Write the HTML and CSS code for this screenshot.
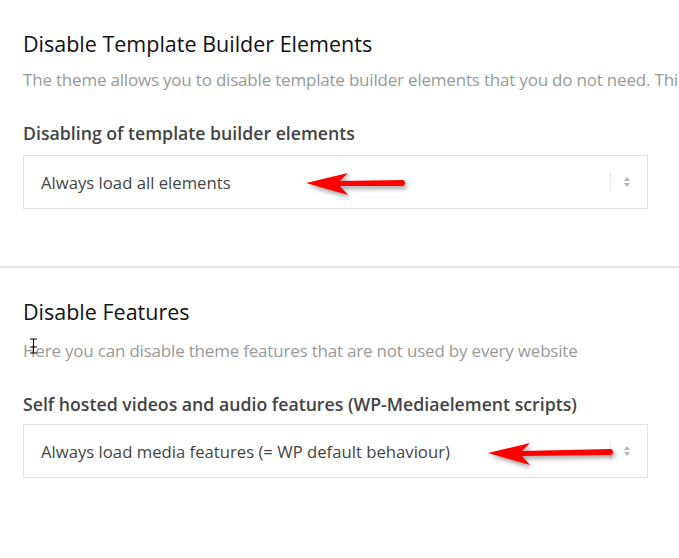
FILE: index.html
```html
<!DOCTYPE html>
<html lang="en">

<head>
    <meta charset="UTF-8">
    <meta name="viewport" content="width=device-width, initial-scale=1.0">
    <title>Performance - Disable Features</title>
    <link rel="stylesheet" href="styles.css">
</head>

<body>

    <section class="group first">
        <h2>Disable Template Builder Elements</h2>
        <p class="desc">The theme allows you to disable template builder elements that you do not need. This can speed up your site.</p>

        <div class="field">
            <label>Disabling of template builder elements</label>
            <div class="select">
                <span class="value">Always load all elements</span>
                <span class="handle">
                    <svg width="8" height="12" viewBox="0 0 8 12"><path d="M4 1 L7 5 H1 Z M4 11 L1 7 H7 Z" fill="#b4b4b4"/></svg>
                </span>
                <svg class="pointer pointer-one" width="104" height="30" viewBox="0 0 104 30">
                    <path d="M2 15 L44 5 L36 13 L98 12 Q101 12 101 15 Q101 18 98 18 L36 18 L44 27 Z" fill="#ff0000"/>
                </svg>
            </div>
        </div>
    </section>

    <hr class="divider">

    <section class="group second">
        <h2>Disable Features</h2>
        <p class="desc">Here you can disable theme features that are not used by every website</p>

        <div class="field">
            <label>Self hosted videos and audio features (WP-Mediaelement scripts)</label>
            <div class="select">
                <span class="value">Always load media features (= WP default behaviour)</span>
                <span class="handle">
                    <svg width="8" height="12" viewBox="0 0 8 12"><path d="M4 1 L7 5 H1 Z M4 11 L1 7 H7 Z" fill="#b4b4b4"/></svg>
                </span>
                <svg class="pointer pointer-two" width="130" height="30" viewBox="0 0 130 30">
                    <path d="M2 16 L44 6 L36 14 L124 12 Q127 12 127 15 Q127 18 124 18 L36 19 L44 28 Z" fill="#ff0000"/>
                </svg>
            </div>
        </div>

        <!-- text cursor left in the screenshot -->
        <svg class="ibeam" width="9" height="16" viewBox="0 0 9 16">
            <path d="M1 1 H8 M4.5 1 V15 M1 15 H8 M1 9 H8" stroke="#000" stroke-width="1" fill="none"/>
        </svg>
    </section>

</body>

</html>
```

FILE: styles.css
```css
body {
    font-family: "Open Sans", Arial, sans-serif;
    margin: 0;
    padding: 0;
    background-color: #fff;
    color: #444;
    overflow: hidden;
}

.group {
    position: relative;
    padding: 0 31px 0 23px;
}

.group.first {
    padding-top: 30px;
}

h2 {
    margin: 0;
    font-size: 21.5px;
    line-height: 28px;
    font-weight: 500;
    color: #111;
}

.desc {
    margin: 10px 0 0;
    font-size: 17px;
    line-height: 24px;
    color: #999;
    white-space: nowrap;
    letter-spacing: -0.2px;
}

.field {
    margin-top: 30px;
}

.field label {
    display: block;
    font-size: 17.7px;
    line-height: 22px;
    font-weight: 600;
    color: #444;
}

.select {
    position: relative;
    display: flex;
    align-items: center;
    height: 54px;
    margin-top: 11px;
    padding: 0 16px 0 17px;
    border: 1px solid #e1e1e1;
    box-sizing: border-box;
    background: #fff;
}

.value {
    flex: 1;
    font-size: 16.7px;
    color: #444;
}

.handle {
    display: flex;
    align-items: center;
    height: 18px;
    padding-left: 12px;
    border-left: 1px solid #e4e4e4;
}

.handle svg {
    display: block;
}

.pointer {
    position: absolute;
    filter: drop-shadow(2px 3px 2px rgba(0, 0, 0, 0.35));
}

.pointer-one {
    left: 280px;
    top: 12px;
}

.pointer-two {
    left: 462px;
    top: 12px;
}

.divider {
    margin: 57px 0 0;
    border: 0;
    border-top: 2px solid #e5e5e5;
}

.group.second {
    padding-top: 30px;
}

.group.second .desc {
    margin-top: 13px;
}

.group.second .select {
    margin-top: 9px;
}

.ibeam {
    position: absolute;
    left: 29px;
    top: 70px;
}
```
